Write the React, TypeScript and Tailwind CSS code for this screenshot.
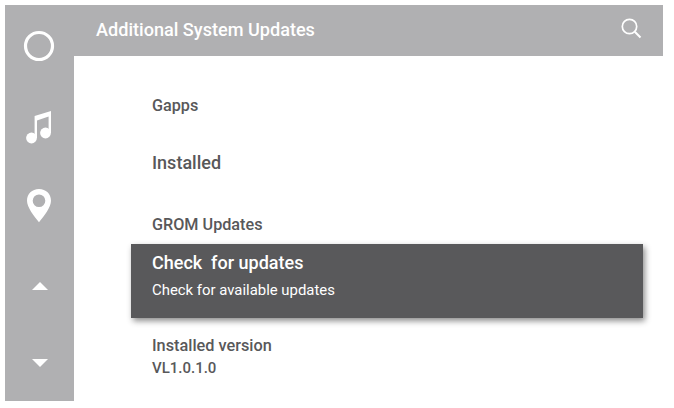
export default function App() {
  return (
    <div className="h-[408px] w-[674px] bg-white p-[5px] pr-[11px] pb-[7px] font-['Roboto',sans-serif] overflow-hidden">
      <div className="flex h-[396px] w-[658px]">
        <aside className="w-[69px] shrink-0 bg-[#b0b0b2] flex flex-col items-center pr-[1px]">
          <svg className="mt-[25px]" width="32" height="32" viewBox="0 0 32 32">
            <circle cx="16" cy="16" r="13.5" fill="none" stroke="white" strokeWidth="3.2" />
          </svg>
          <svg className="mt-[47px]" width="28" height="36" viewBox="0 0 28 36" fill="white">
            <path d="M9.6 7 L26 2 V24 H23.6 V7.5 L12 11.5 V29 H9.6 Z" />
            <circle cx="6.5" cy="29" r="5.4" />
            <circle cx="20.5" cy="24" r="5.4" />
          </svg>
          <svg className="mt-[43px]" width="26" height="36" viewBox="0 0 26 36">
            <path fillRule="evenodd" fill="white" d="M13 1 C6 1 1 6 1 12.8 C1 19.5 8 28 13 34.3 C18 28 25 19.5 25 12.8 C25 6 20 1 13 1 Z M13 6.4 A6.3 6.3 0 1 1 13 19 A6.3 6.3 0 1 1 13 6.4 Z" />
          </svg>
          <svg className="mt-[57px] ml-[1px]" width="18" height="10" viewBox="0 0 18 10" fill="white">
            <path d="M9 1 L17 9 H1 Z" />
          </svg>
          <svg className="mt-[67px] ml-[1px]" width="18" height="10" viewBox="0 0 18 10" fill="white">
            <path d="M1 1 H17 L9 9 Z" />
          </svg>
        </aside>
        <div className="flex-1 flex flex-col">
          <header className="h-[51px] shrink-0 bg-[#b0b0b2] flex items-center justify-between pl-[22px] pr-[21px]">
            <span className="text-white text-[18.1px] font-medium leading-none">Additional System Updates</span>
            <svg className="mb-[5px]" width="22" height="22" viewBox="0 0 22 22" fill="none" stroke="white">
              <circle cx="9.5" cy="9.5" r="7.2" strokeWidth="1.7" />
              <path d="M14.8 14.8 L20.5 20.5" strokeWidth="2" />
            </svg>
          </header>
          <main className="flex-1 flex flex-col pt-[39px]">
            <p className="pl-[78px] h-[22px] leading-[22px] text-[16.2px] font-medium text-[#58585a]">Gapps</p>
            <p className="pl-[78px] mt-[34px] h-[24px] leading-[24px] text-[18px] font-medium text-[#58585a]">Installed</p>
            <p className="pl-[78px] mt-[39px] h-[22px] leading-[22px] text-[16.2px] font-medium text-[#58585a]">GROM Updates</p>
            <div className="ml-[57px] mt-[8px] w-[512px] h-[74px] bg-[#59595b] shadow-[2px_3px_6px_rgba(0,0,0,0.45)] pl-[21px] pt-[7px]">
              <p className="h-[24px] leading-[24px] text-[18px] font-medium text-white whitespace-pre">Check  for updates</p>
              <p className="mt-[5px] h-[20px] leading-[20px] text-[14.9px] font-normal text-white">Check for available updates</p>
            </div>
            <p className="pl-[78px] mt-[18px] h-[20px] leading-[20px] text-[16.3px] font-medium text-[#58585a]">Installed version</p>
            <p className="pl-[78px] mt-[2px] h-[20px] leading-[20px] text-[15px] font-medium text-[#58585a]">VL1.0.1.0</p>
          </main>
        </div>
      </div>
    </div>
  )
}
